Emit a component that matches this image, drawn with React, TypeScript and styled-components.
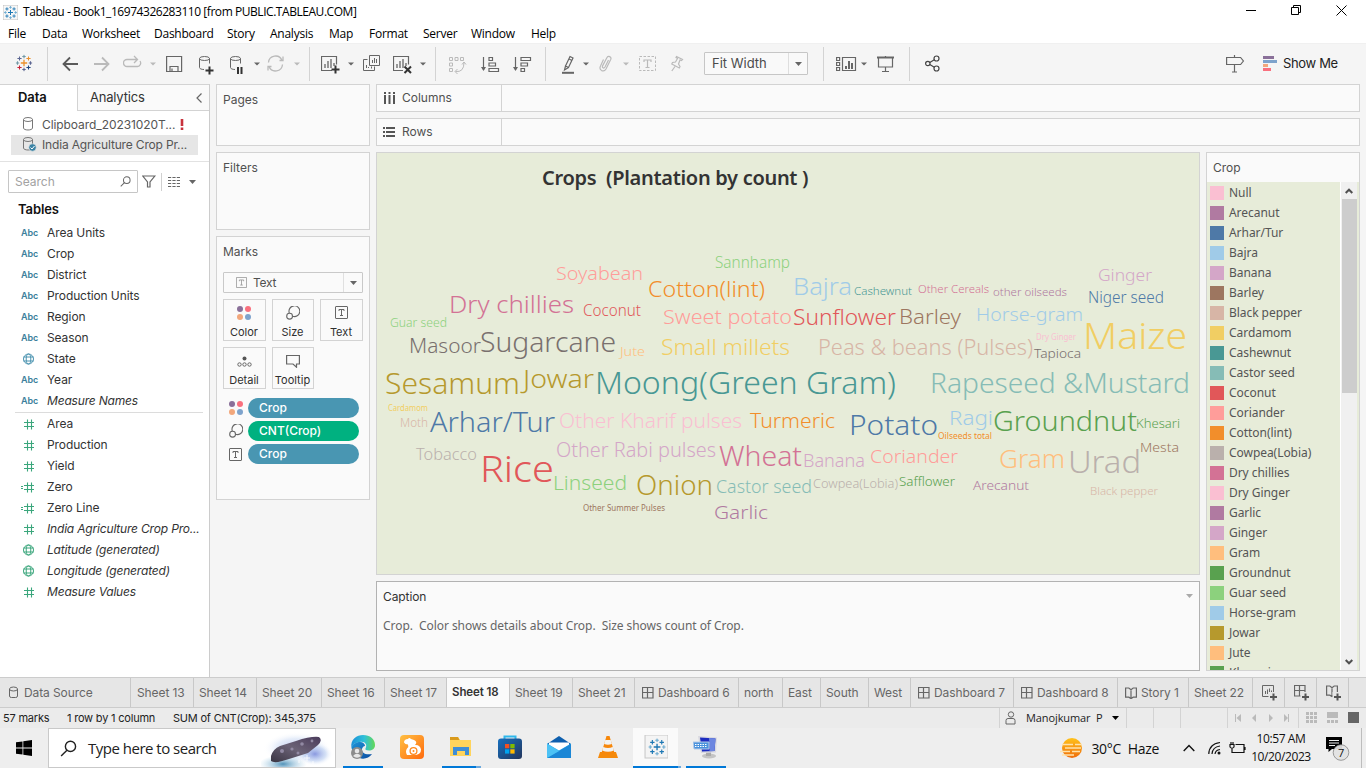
import React from "react";
import styled, { createGlobalStyle } from "styled-components";

const Global = createGlobalStyle`
  html, body { margin: 0; padding: 0; }
  body { width: 1366px; height: 768px; overflow: hidden; background: #f5f5f5; }
  *, *::before, *::after { box-sizing: border-box; }
  svg { display: block; flex: none; }
`;

const UI = `"Inter", "Liberation Sans", sans-serif`;
const SYS = `"Open Sans", "Noto Sans", sans-serif`;
const LINE = "#d3d3d3";

const Window = styled.div`
  width: 1366px;
  height: 768px;
  display: flex;
  flex-direction: column;
  background: #f5f5f5;
  font-family: ${UI};
  font-size: 12px;
  color: #333;
  white-space: pre;
`;

/* ---------- title and menu ---------- */
const TitleBar = styled.header`
  height: 24px;
  flex: none;
  display: flex;
  align-items: center;
  background: #fff;
  padding-left: 3px;
  font: 12px/24px ${SYS};
  color: #000;
`;
const TitleText = styled.span`
  margin-left: 5px;
  letter-spacing: -0.45px;
  flex: 1;
`;
const WindowButtons = styled.div`
  display: flex;
  align-items: center;
  gap: 35px;
  padding: 0 19px 4px 0;
`;
const MenuBar = styled.nav`
  height: 19px;
  flex: none;
  display: flex;
  padding-left: 8px;
  background: #fff;
  font: 12px/20px ${SYS};
  color: #000;
`;
const MenuItem = styled.span<{ $w: number }>`
  width: ${(p) => p.$w}px;
  letter-spacing: -0.25px;
`;

/* ---------- toolbar ---------- */
const Toolbar = styled.div`
  height: 41px;
  flex: none;
  display: flex;
  align-items: center;
  border-top: 1px solid #f0f0f0;
  background: #f5f5f5;
  padding-bottom: 2px;
`;
const Slot = styled.div<{ $w: number }>`
  width: ${(p) => p.$w}px;
  height: 24px;
  flex: none;
  overflow: hidden;
`;
const Sep = styled.div<{ $after: number }>`
  width: 1px;
  height: 34px;
  flex: none;
  margin-top: 2px;
  margin-right: ${(p) => p.$after}px;
  background: ${LINE};
`;
const FitSelect = styled.div`
  width: 104px;
  height: 23px;
  flex: none;
  margin-right: 15px;
  margin-top: 1px;
  display: flex;
  border: 1px solid #c6c6c6;
  border-radius: 1px;
  background: #f9f9f9;
  font-size: 13px;
  line-height: 21px;
  color: #4b4b4b;
  padding-left: 7px;
`;
const FitArrow = styled.span`
  margin-left: auto;
  width: 19px;
  border-left: 1px solid #dedede;
  display: grid;
  place-items: center;
`;
const ShowMe = styled.div`
  display: flex;
  align-items: center;
  gap: 6px;
  font-size: 13px;
  letter-spacing: -0.35px;
  color: #222;
`;

/* ---------- body ---------- */
const Main = styled.div`
  height: 593px;
  flex: none;
  display: flex;
`;
const DataPane = styled.aside`
  width: 210px;
  flex: none;
  background: #fff;
  border-right: 1px solid #ccc;
  border-top: 1px solid ${LINE};
  display: flex;
  flex-direction: column;
`;
const PaneTabs = styled.div`
  height: 26px;
  display: flex;
  font-size: 13px;
  line-height: 25px;
`;
const DataTab = styled.div`
  width: 77px;
  padding-left: 18px;
  font-weight: 600;
  font-size: 13px;
  color: #111;
  letter-spacing: -0.1px;
`;
const AnalyticsTab = styled.div`
  flex: 1;
  display: flex;
  justify-content: space-between;
  align-items: center;
  border-left: 1px solid ${LINE};
  border-bottom: 1px solid ${LINE};
  background: #fafafa;
  padding: 0 7px 0 12px;
  letter-spacing: -0.2px;
`;
const Sources = styled.div`
  padding: 4px 11px 6px;
  height: 51px;
  border-bottom: 1px solid #e2e2e2;
`;
const Source = styled.div<{ $on?: boolean }>`
  height: 20px;
  display: flex;
  align-items: center;
  padding: 0 0 2px 11px;
  gap: 4px;
  color: #555;
  letter-spacing: ${(p) => (p.$on ? -0.16 : -0.08)}px;
  background: ${(p) => (p.$on ? "#e6e6e6" : "transparent")};
`;
const Bang = styled.span`
  width: 4px;
  height: 11px;
  margin-left: 1px;
  display: flex;
`;
const SearchRow = styled.div`
  display: flex;
  align-items: center;
  padding: 8px 0 0 8px;
  height: 31px;
  flex: none;
`;
const SearchBox = styled.div`
  width: 130px;
  height: 23px;
  display: flex;
  align-items: center;
  justify-content: space-between;
  border: 1px solid #c6c6c6;
  border-radius: 1px;
  padding: 0 6px;
  color: #a2a2a2;
  margin-right: 4px;
`;
const TablesTitle = styled.div`
  height: 29px;
  line-height: 33px;
  padding-left: 18px;
  font-weight: 600;
  font-size: 13px;
  letter-spacing: -0.1px;
  color: #111;
`;
const Field = styled.div<{ $italic?: boolean }>`
  height: 21px;
  display: flex;
  align-items: center;
  color: #333;
  letter-spacing: ${(p) => (p.$italic ? -0.18 : -0.1)}px;
  font-style: ${(p) => (p.$italic ? "italic" : "normal")};
`;
const FieldIcon = styled.span`
  width: 47px;
  padding: 1px 0 0 21px;
  color: #3d7f9c;
  font: 600 9px/20px ${UI};
  letter-spacing: -0.1px;
`;
const FieldRule = styled.div`
  margin: 1px 6px 0 15px;
  height: 1px;
  flex: none;
  background: #dcdcdc;
`;

const Cards = styled.div`
  width: 154px;
  margin: 0 6px;
  flex: none;
  display: flex;
  flex-direction: column;
  gap: 6px;
`;
const Card = styled.section<{ $h: number }>`
  height: ${(p) => p.$h}px;
  flex: none;
  border: 1px solid ${LINE};
  background: #fafafa;
  padding: 0 6px;
  color: #505050;
`;
const CardTitle = styled.div`
  height: 30px;
  line-height: 29px;
`;
const MarkSelect = styled.div`
  height: 21px;
  width: 140px;
  margin-top: 5px;
  display: flex;
  align-items: center;
  border: 1px solid #c9c9c9;
  border-radius: 1px;
  padding-left: 12px;
  gap: 6px;
  letter-spacing: -0.3px;
`;
const MarkArrow = styled.span`
  margin-left: auto;
  width: 19px;
  height: 19px;
  border-left: 1px solid #e0e0e0;
  display: grid;
  place-items: center;
`;
const MarkGrid = styled.div`
  display: grid;
  grid-template-columns: 43px 42px 43px;
  gap: 6px;
  margin-top: 6px;
  color: #2f2f2f;
`;
const MarkButton = styled.div`
  height: 42px;
  border: 1px solid ${LINE};
  display: flex;
  flex-direction: column;
  align-items: center;
  justify-content: space-between;
  padding: 6px 1px 1px 0;
  font-size: 11px;
  line-height: 14px;
`;
const Pills = styled.div`
  padding: 9px 4px 0 6px;
  display: flex;
  flex-direction: column;
  gap: 3px;
`;
const PillRow = styled.div`
  display: flex;
  align-items: center;
  gap: 5px;
`;
const Pill = styled.div<{ $c: string }>`
  width: 111px;
  height: 20px;
  border-radius: 10px;
  padding-left: 11px;
  line-height: 20px;
  color: #fff;
  font-weight: 500;
  background: ${(p) => p.$c};
`;

const Workspace = styled.div`
  width: 984px;
  flex: none;
  display: flex;
  flex-direction: column;
  gap: 6px;
`;
const Shelf = styled.div`
  height: 28px;
  flex: none;
  display: flex;
  border: 1px solid ${LINE};
  background: #fafafa;
`;
const ShelfName = styled.div`
  width: 125px;
  display: flex;
  align-items: center;
  gap: 6px;
  padding: 0 0 1px 6px;
  border-right: 1px solid ${LINE};
  color: #505050;
`;
const Lower = styled.div`
  display: flex;
  gap: 6px;
`;
const ViewColumn = styled.div`
  width: 824px;
  display: flex;
  flex-direction: column;
  gap: 6px;
`;
const View = styled.section`
  height: 423px;
  border: 1px solid ${LINE};
  background: #e7ecd9;
`;
const ViewTitle = styled.h1`
  margin: 0;
  height: 47px;
  padding-left: 165px;
  font: 600 20px/50px "Noto Sans", sans-serif;
  letter-spacing: -0.3px;
  color: #333;
`;
const Caption = styled.section`
  height: 90px;
  border: 1px solid #b2b2b2;
  background: #fafafa;
  padding: 0 6px;
`;
const CaptionHead = styled.div`
  height: 28px;
  display: flex;
  align-items: center;
  justify-content: space-between;
  color: #333;
  letter-spacing: -0.1px;
`;
const CaptionText = styled.p`
  margin: 7px 0 0;
  font: 12px/17px "Noto Sans", sans-serif;
  letter-spacing: -0.06px;
  color: #666;
`;
const Legend = styled.section`
  width: 154px;
  height: 519px;
  border: 1px solid ${LINE};
  background: #fafafa;
`;
const LegendHead = styled.div`
  height: 29px;
  padding-left: 6px;
  line-height: 30px;
  color: #505050;
`;
const LegendBody = styled.div`
  height: 488px;
  display: flex;
  overflow: hidden;
  background: #e7ecd9;
`;
const LegendList = styled.div`
  width: 133px;
  height: 488px;
  padding-top: 1px;
  overflow: hidden;
`;
const LegendItem = styled.div`
  height: 20px;
  display: flex;
  align-items: center;
  padding-left: 3px;
  gap: 5px;
  font: 12px/20px "Noto Sans", sans-serif;
  letter-spacing: -0.05px;
  color: #555;
`;
const Swatch = styled.span<{ $c: string }>`
  width: 14px;
  height: 14px;
  background: ${(p) => p.$c};
`;
const Scroll = styled.div`
  width: 17px;
  border-left: 1px solid #fff;
  background: #f0f0f0;
  display: flex;
  flex-direction: column;
  align-items: center;
  margin-right: 2px;
`;
const ScrollEnd = styled.div`
  height: 17px;
  display: grid;
  place-items: center;
`;
const Thumb = styled.div`
  width: 15px;
  height: 194px;
  margin-bottom: auto;
  background: #cdcdcd;
`;

/* ---------- sheet tabs and status ---------- */
const SheetTabs = styled.div`
  height: 31px;
  flex: none;
  display: flex;
  border-top: 1px solid #ccc;
  border-bottom: 1px solid #ccc;
  background: #e6e6e6;
`;
const SheetTab = styled.div<{ $w: number; $on?: boolean; $pad?: number }>`
  width: ${(p) => p.$w}px;
  flex: none;
  display: flex;
  align-items: center;
  gap: 4px;
  padding-left: ${(p) => p.$pad ?? 6}px;
  padding-bottom: ${(p) => (p.$on ? 2 : 0)}px;
  border-right: 1px solid #c8c8c8;
  background: ${(p) => (p.$on ? "#fafafa" : "transparent")};
  color: ${(p) => (p.$on ? "#333" : "#666")};
  font-weight: ${(p) => (p.$on ? 600 : 400)};
  letter-spacing: ${(p) => (p.$on ? -0.1 : -0.1)}px;
  font-size: ${(p) => (p.$on ? 11.5 : 12)}px;
`;
const Status = styled.div`
  height: 20px;
  flex: none;
  display: flex;
  background: #ebebeb;
  font-size: 11px;
  line-height: 20px;
  letter-spacing: -0.2px;
  color: #222;
  padding-left: 3px;
`;
const StatusText = styled.span<{ $w: number }>`
  width: ${(p) => p.$w}px;
`;
const StatusCell = styled.div<{ $w: number }>`
  width: ${(p) => p.$w}px;
  border-left: 1px solid ${LINE};
  display: flex;
  align-items: center;
  padding-left: 5px;
`;
const UserName = styled.span`
  width: 77px;
  margin: 0 9px 0 9px;
  font: 11px/20px ${SYS};
  letter-spacing: -0.1px;
`;

/* ---------- taskbar ---------- */
const Taskbar = styled.footer`
  height: 40px;
  flex: none;
  display: flex;
  align-items: center;
  background: #eeeeee;
  color: #111;
  font-family: ${SYS};
`;
const Start = styled.div`
  width: 48px;
  display: grid;
  place-items: center;
`;
const TaskSearch = styled.div`
  width: 288px;
  height: 40px;
  display: flex;
  align-items: center;
  justify-content: space-between;
  background: #fff;
  border: 1px solid #c9c9c9;
  padding-left: 11px;
  font-size: 15px;
  letter-spacing: -0.5px;
  color: #222;
`;
const TaskPrompt = styled.span`
  flex: 1;
  margin-left: 11px;
`;
const TaskApp = styled.div<{ $w: number; $line?: string; $tile?: boolean }>`
  width: ${(p) => p.$w}px;
  height: 40px;
  flex: none;
  display: grid;
  place-items: center;
  background: ${(p) => (p.$tile ? "#fafafa" : "transparent")};
  border-bottom: 2px solid ${(p) => p.$line ?? "transparent"};
`;
const Gap = styled.div<{ $w: number }>`
  width: ${(p) => p.$w}px;
  flex: none;
`;
const StackEdge = styled.div<{ $w: number }>`
  width: ${(p) => p.$w}px;
  height: 40px;
  flex: none;
  border-bottom: 2px solid #6ca9de;
`;
const Tray = styled.div`
  margin-left: auto;
  display: flex;
  align-items: center;
  font-size: 14px;
  letter-spacing: -0.3px;
`;
const Clock = styled.div`
  width: 70px;
  text-align: center;
  font-size: 12px;
  line-height: 18px;
  letter-spacing: -0.4px;
`;
const TrayEnd = styled.div`
  width: 5px;
  height: 40px;
  border-left: 1px solid #bdbdbd;
`;

/* ---------- icons ---------- */
const Caret = ({ c = "#666" }: { c?: string }) => (
  <svg width="7" height="4" viewBox="0 0 7 4"><path d="M0 0H7L3.5 4Z" fill={c} /></svg>
);
const ToolCaret = ({ c = "#666" }: { c?: string }) => (
  <svg width="6" height="24"><path d="M0 11.5H6L3 14.5Z" fill={c} /></svg>
);

const crosses: [number, number, number, string, string][] = [
  [8.5, 8.5, 3.2, "#eb912c", "#1c77b4"],
  [4, 4, 2.1, "#5c6692", "#1c77b4"],
  [13, 4, 2.1, "#eb912c", "#1c77b4"],
  [4, 13, 2.1, "#c72035", "#1c77b4"],
  [13, 13, 2.1, "#1f447e", "#1c77b4"],
  [8.5, 2, 1.7, "#7199a6", "#6aaad0"],
  [8.5, 15, 1.7, "#5c6692", "#6aaad0"],
  [2, 8.5, 1.7, "#7199a6", "#6aaad0"],
  [15, 8.5, 1.7, "#5c6692", "#6aaad0"],
];
const TableauMark = ({ size, mono }: { size: number; mono?: boolean }) => (
  <svg width={size} height={size} viewBox="0 0 17 17">
    {crosses.map(([x, y, r, c, m], i) => (
      <path key={i} d={`M${x - r} ${y}h${2 * r}M${x} ${y - r}v${2 * r}`} stroke={mono ? m : c} strokeWidth={i === 0 ? 1.3 : 1.1} />
    ))}
  </svg>
);
const Bars = ({ y = 0 }) => (
  <path d={`M4 ${y + 9}v4M7 ${y + 6}v7M10 ${y + 4}v9M13 ${y + 8}v3`} stroke="#666" strokeWidth="1.3" />
);
const Db = () => (
  <g fill="none" stroke="#666">
    <ellipse cx="5.5" cy="7.5" rx="5" ry="2" />
    <path d="M.5 7.5v9c0 1.2 2 2 4.5 2M10.5 7.5v5" />
  </g>
);
const SourceIcon = ({ check }: { check?: boolean }) => (
  <svg width="16" height="16" viewBox="0 0 16 16" fill="none" stroke="#777">
    <ellipse cx="6" cy="3.5" rx="4.5" ry="2" />
    <path d="M1.500 3.500V12c0 1.200 2 2 4.500 2s4.500-.8 4.500-2V3.500" />
    {check && (<><circle cx="10.500" cy="11.500" r="3.700" fill="#3a83a5" stroke="#e6e6e6" strokeWidth=".6" /><path d="M8.500 11.500l1.500 1.500 2.500-3" stroke="#fff" /></>)}
  </svg>
);
const TextBox = () => (
  <svg width="13" height="13" viewBox="0 0 13 13" fill="none" stroke="#666">
    <rect x=".5" y=".5" width="12" height="12" rx=".5" />
    <path d="M4 5V3.500H9V5M6.500 3.500v6M5 9.500h3" />
  </svg>
);
const ColorDots = () => (
  <svg width="14" height="14">
    <circle cx="3" cy="3" r="3" fill="#8a7099" /><circle cx="11" cy="3" r="3" fill="#f9707e" />
    <circle cx="3" cy="11" r="3" fill="#f2a77c" /><circle cx="11" cy="11" r="3" fill="#7ea3cc" />
  </svg>
);
const SizeIcon = () => (
  <svg width="14" height="14" fill="none" stroke="#666" strokeWidth="1.100">
    <path d="M3.300 7A5.400 5.400 0 1 1 6.600 10.300" /><circle cx="3.600" cy="10.200" r="2.900" />
  </svg>
);
const Magnifier = ({ s = 12, c = "#666", w = 1.1 }: { s?: number; c?: string; w?: number }) => (
  <svg width={s} height={s} viewBox="0 0 12 12" fill="none" stroke={c} strokeWidth={w}>
    <circle cx="7.400" cy="4.500" r="3.600" /><path d="M4.900 7.200L.8 11.300" />
  </svg>
);
const Plus = () => (
  <>
    <rect x="6.500" y="7" width="9" height="9" fill="#e6e6e6" stroke="none" />
    <path d="M11.500 8.500v7M8 12h7" stroke="#555" strokeWidth="2" />
  </>
);
const Grid4 = ({ plus }: { plus?: boolean }) => (
  <svg width={plus ? 16 : 12} height={plus ? 16 : 12} fill="none" stroke="#666">
    <path d="M.5 .5h10.500v10.500H.5zM.5 5.500h10.500M5.500 .5v10.500" strokeWidth="1.200" />
    {plus && <Plus />}
  </svg>
);
const Book = ({ plus }: { plus?: boolean }) => (
  <svg width={plus ? 16 : 12} height={plus ? 16 : 12} fill="none" stroke="#666" strokeWidth="1.200">
    <path d="M.6 1h3.200l2.200 1.700L8.200 1h3.200v9.200H8.200L6 11.600 3.800 10.200H.6zM6 2.700v8.500" />
    {plus && <Plus />}
  </svg>
);
const Hash = ({ eq }: { eq?: boolean }) => (
  <svg width="15" height="12" viewBox="1 0 15 12" stroke="#3ba67c" fill="none">
    <path d="M4 4.500h10M4 8.500h10M7.500 1.500v10M11.500 1.500v10" strokeWidth="1.100" />
    {eq && <path d="M0 5.500h3M0 7.500h3" />}
  </svg>
);
const Globe = ({ c }: { c: string }) => (
  <svg width="15" height="12" viewBox="1 0 15 12" stroke={c} fill="none">
    <circle cx="8.500" cy="6" r="5" /><ellipse cx="8.500" cy="6" rx="2.300" ry="5" />
    <path d="M3.500 4h10M3.500 8h10" />
  </svg>
);
const Person = () => (
  <svg width="12" height="14" fill="none" stroke="#666"><circle cx="6" cy="3.500" r="2.700" /><path d="M1 13v-3.500q0-2 2-2h5q2 0 2 2V13z" /></svg>
);

/* ---------- data ---------- */
const menus: [string, number][] = [["File", 34], ["Data", 40], ["Worksheet", 72], ["Dashboard", 73], ["Story", 43], ["Analysis", 59], ["Map", 40], ["Format", 54], ["Server", 48], ["Window", 60], ["Help", 40]];

const P = {
  blue: "#4e79a7", sky: "#a0cbe8", orange: "#f28e2b", peach: "#ffbe7d", green: "#59a14f", lime: "#8cd17d",
  olive: "#b6992d", yellow: "#f1ce63", teal: "#499894", aqua: "#86bcb6", red: "#e15759", salmon: "#ff9d9a",
  grey: "#79706e", silver: "#bab0ac", rose: "#d37295", pink: "#fabfd2", plum: "#b07aa1", lilac: "#d4a6c8",
  brown: "#9d7660", sand: "#d7b5a6",
};

// word, left, right, baseline, size, colour
const words: [string, number, number, number, number, string][] = [
  ["Sannhamp", 715, 790, 268, 15.5, P.lime],
  ["Soyabean", 556, 643, 279.5, 18.500, P.salmon],
  ["Cotton(lint)", 648, 765, 296.5, 21.500, P.orange],
  ["Bajra", 793, 852, 294.5, 23, P.sky],
  ["Cashewnut", 854, 912, 295, 11.500, P.teal],
  ["Other Cereals", 918, 989, 293, 11.500, P.rose],
  ["other oilseeds", 993, 1067, 296, 11.500, P.plum],
  ["Ginger", 1098, 1152, 281, 17, P.lilac],
  ["Niger seed", 1088, 1164, 303, 15.500, P.blue],
  ["Dry chillies", 449, 574, 313, 24.500, P.rose],
  ["Coconut", 583, 641, 316, 15.500, P.red],
  ["Guar seed", 390, 447, 327, 12, P.lime],
  ["Sweet potato", 663, 792, 324, 20, P.salmon],
  ["Sunflower", 793, 896, 325, 21, P.red],
  ["Barley", 899, 961, 324, 20.500, P.brown],
  ["Horse-gram", 976, 1083, 321, 18.500, P.sky],
  ["Masoor", 409, 481, 352.5, 20.500, P.grey],
  ["Sugarcane", 480, 616, 351.5, 27, P.grey],
  ["Jute", 620, 645, 356, 12.500, P.peach],
  ["Small millets", 661, 790, 354.5, 21, P.yellow],
  ["Peas & beans (Pulses)", 818, 1033, 354.5, 21.500, P.sand],
  ["Dry Ginger", 1036, 1076, 340, 8, P.pink],
  ["Tapioca", 1034, 1081, 358, 13, P.grey],
  ["Maize", 1083, 1187, 348.500, 37, P.yellow],
  ["Sesamum", 385, 520, 394, 29.500, P.olive],
  ["Jowar", 523, 594, 387.5, 25.500, P.olive],
  ["Moong(Green Gram)", 595, 896, 394, 31, P.teal],
  ["Rapeseed &Mustard", 930, 1190, 393, 27.500, P.aqua],
  ["Cardamom", 388, 428, 411, 8, P.yellow],
  ["Moth", 400, 428, 427, 12, P.sand],
  ["Arhar/Tur", 430, 555, 432, 27.500, P.blue],
  ["Other Kharif pulses", 559, 742, 427.5, 20.500, P.pink],
  ["Turmeric", 750, 835, 427.5, 19.500, P.orange],
  ["Potato", 849, 938, 434.5, 27.500, P.blue],
  ["Ragi", 949, 993, 424.5, 20, P.sky],
  ["Groundnut", 993, 1137, 431, 27.500, P.green],
  ["Khesari", 1136, 1180, 428, 12, P.green],
  ["Oilseeds total", 938, 992, 439, 8, P.orange],
  ["Tobacco", 416, 477, 460, 16, P.silver],
  ["Rice", 480, 554, 481.5, 36, P.red],
  ["Other Rabi pulses", 556, 716, 456.5, 19.500, P.lilac],
  ["Wheat", 719, 802, 465.5, 27.500, P.rose],
  ["Banana", 803, 865, 467, 17.500, P.lilac],
  ["Coriander", 870, 958, 463, 19, P.salmon],
  ["Gram", 999, 1065, 468, 25, P.peach],
  ["Urad", 1068, 1141, 473, 31, P.silver],
  ["Mesta", 1140, 1179, 452, 13, P.brown],
  ["Linseed", 553, 627, 489.5, 20, P.lime],
  ["Onion", 636, 713, 494.5, 27, P.olive],
  ["Castor seed", 716, 812, 492.5, 17.500, P.aqua],
  ["Cowpea(Lobia)", 813, 898, 488, 12.500, P.silver],
  ["Safflower", 899, 955, 486, 12.500, P.green],
  ["Arecanut", 973, 1029, 490, 13, P.plum],
  ["Black pepper", 1090, 1158, 495, 11.500, P.sand],
  ["Other Summer Pulses", 583, 665, 511, 8.500, P.brown],
  ["Garlic", 714, 768, 518.5, 19, P.plum],
];

const legend: [string, string][] = [
  ["Null", P.pink], ["Arecanut", P.plum], ["Arhar/Tur", P.blue], ["Bajra", P.sky], ["Banana", P.lilac],
  ["Barley", P.brown], ["Black pepper", P.sand], ["Cardamom", P.yellow], ["Cashewnut", P.teal],
  ["Castor seed", P.aqua], ["Coconut", P.red], ["Coriander", P.salmon], ["Cotton(lint)", P.orange],
  ["Cowpea(Lobia)", P.silver], ["Dry chillies", P.rose], ["Dry Ginger", P.pink], ["Garlic", P.plum],
  ["Ginger", P.lilac], ["Gram", P.peach], ["Groundnut", P.green], ["Guar seed", P.lime],
  ["Horse-gram", P.sky], ["Jowar", P.olive], ["Jute", P.peach], ["Khesari", P.green],
];

const dimensions = ["Area Units", "Crop", "District", "Production Units", "Region", "Season", "State", "Year"];
const measures: [string, "hash" | "calc" | "globe", boolean][] = [
  ["Area", "hash", false], ["Production", "hash", false], ["Yield", "hash", false], ["Zero", "calc", false],
  ["Zero Line", "calc", false], ["India Agriculture Crop Pro...", "hash", true], ["Latitude (generated)", "globe", true],
  ["Longitude (generated)", "globe", true], ["Measure Values", "hash", true],
];

type TabDef = { label: string; w: number; icon?: React.ReactNode; on?: boolean; pad?: number };
const tabs: TabDef[] = [
  { label: "Data Source", w: 131, pad: 9, icon: <svg width="11" height="14" fill="none" stroke="#666"><ellipse cx="4.500" cy="3" rx="4" ry="2" /><path d="M.5 3v7q0 1.500 2 1.500h4q2 0 2-1.500V3" /></svg> },
  { label: "Sheet 13", w: 63 }, { label: "Sheet 14", w: 63, pad: 5 }, { label: "Sheet 20", w: 65, pad: 5 },
  { label: "Sheet 16", w: 63, pad: 5 }, { label: "Sheet 17", w: 62, pad: 5 }, { label: "Sheet 18", w: 63, on: true, pad: 5 },
  { label: "Sheet 19", w: 63, pad: 5 }, { label: "Sheet 21", w: 62, pad: 5 },
  { label: "Dashboard 6", w: 104, pad: 7, icon: <Grid4 /> },
  { label: "north", w: 44, pad: 5 }, { label: "East", w: 38, pad: 5 }, { label: "South", w: 48, pad: 5 }, { label: "West", w: 42, pad: 5 },
  { label: "Dashboard 7", w: 103, pad: 7, icon: <Grid4 /> }, { label: "Dashboard 8", w: 104, pad: 7, icon: <Grid4 /> },
  { label: "Story 1", w: 71, pad: 7, icon: <Book /> }, { label: "Sheet 22", w: 64, pad: 5 },
];

const D = "#666";
const L = "#bababa";

const ToolbarRow = () => (
  <Toolbar>
    <Gap $w={15} />
    <Slot $w={32}><svg width="18" height="24" viewBox="0 -3.500 17 24"><TableauMark size={17} /></svg></Slot>
    <Sep $after={14} />
    <Slot $w={32}><svg width="17" height="24" fill="none" stroke="#5a5a5a" strokeWidth="1.800"><path d="M1 13H16M8 6.500L1.500 13L8 19.500" /></svg></Slot>
    <Slot $w={29}><svg width="17" height="24" fill="none" stroke={L} strokeWidth="1.800"><path d="M0 13H15M8 6.500L14.500 13L8 19.500" /></svg></Slot>
    <Slot $w={27}><svg width="19" height="24" fill="none" stroke={L} strokeWidth="1.300"><path d="M14 8.500H4a3.500 3.500 0 0 0 0 7h10.500a3.500 3.500 0 0 0 2.500-5.500M11 5l3.500 3.500L11 12" /></svg></Slot>
    <Slot $w={16}><ToolCaret c={L} /></Slot>
    <Slot $w={33}><svg width="17" height="24" fill="none" stroke={D} strokeWidth="1.200"><path d="M.6 5.500h15v15h-15zM4 20v-4.500h8V20M6 20v-2.500" /></svg></Slot>
    <Slot $w={31}><svg width="16" height="24"><Db /><path d="M10.500 15.500v8M6.500 19.500h8" stroke="#333" strokeWidth="2" /></svg></Slot>
    <Slot $w={24}><svg width="14" height="24"><Db /><path d="M8 16v7M11.500 16v7" stroke="#333" strokeWidth="2" /></svg></Slot>
    <Slot $w={13}><ToolCaret /></Slot>
    <Slot $w={27}><svg width="18" height="24" fill="none" stroke={L} strokeWidth="1.300"><path d="M1.500 11.500A7 7 0 0 1 15 9.500M15.500 13.500A7 7 0 0 1 2 15.500M12.500 9.500h3.500v-4M4.500 15.500H1v4" /></svg></Slot>
    <Slot $w={15}><ToolCaret c={L} /></Slot>
    <Sep $after={11} />
    <Slot $w={27}><svg width="20" height="24" fill="none" stroke={D}><path d="M11 19.500H.5V5.500h15v8" strokeWidth="1.200" /><Bars y={4} /><path d="M14.500 14.500v8M10.500 18.500h8" stroke="#333" strokeWidth="2" /></svg></Slot>
    <Slot $w={15}><ToolCaret /></Slot>
    <Slot $w={30}><svg width="18" height="24" fill="none" stroke={D}><path d="M4.500 8.500H.5v11h11v-4M6.500 4.500h10v10h-10zM9.500 12v-3M11.500 12V7M13.500 12V8M3.500 17v-3M5.500 17v-1M8.500 17.500v-2" /></svg></Slot>
    <Slot $w={27}><svg width="20" height="24" fill="none" stroke={D}><path d="M10 19.500H.5V5.500h15v8" strokeWidth="1.200" /><Bars y={4} /><path d="M11.500 15.500l6.500 6.500M18 15.500L11.500 22" stroke="#333" strokeWidth="2" /></svg></Slot>
    <Slot $w={15}><ToolCaret /></Slot>
    <Sep $after={13} />
    <Slot $w={32}><svg width="18" height="24" fill="none" stroke={L}><path d="M.5 6.500h3v3h-3zM6 6.500h3v3H6zM11.500 6.500h3v3h-3zM.5 12h3v3h-3zM.5 17.500h3v3h-3zM6.500 20.500q8.500 1 8.500-9M13 13.500l2-2.500 2 2.500M8.500 18l-2.500 2.500L8.500 23" /></svg></Slot>
    <Slot $w={32}><svg width="19" height="24" fill="none" stroke={D} strokeWidth="1.200"><path d="M2.500 6v13M8 6.500h3.500v3H8zM8 12h6.500v3H8zM8 17.500h9.500v3H8z" /><path d="M0 16h5l-2.500 4z" fill={D} stroke="none" /></svg></Slot>
    <Slot $w={32}><svg width="19" height="24" fill="none" stroke={D} strokeWidth="1.200"><path d="M2.500 6v13M8 6.500h9.500v3H8zM8 12h6.500v3H8zM8 17.500h3.500v3H8z" /><path d="M0 16h5l-2.500 4z" fill={D} stroke="none" /></svg></Slot>
    <Sep $after={16} />
    <Slot $w={21}><svg width="13" height="24" fill="none" stroke={D} strokeWidth="1.200"><path d="M8 5.500l3 1.500-4.500 9.500-3-1.500zM3.500 15l-1 4 4-2.500M7 8l3 1.500" /><path d="M0 21.800h12" strokeWidth="2" /></svg></Slot>
    <Slot $w={16}><ToolCaret /></Slot>
    <Slot $w={24}><svg width="14" height="24" fill="none" stroke={L} strokeWidth="1.200"><path d="M9.500 9l-3.500 7q-1 1.500-2 .8-1-.6-.3-2.200L8 6.500q1-1.700 2.700-.9 1.900 1 1 3L7 18q-1.600 2.700-4.300 1.600Q0 18 1.500 15l3-6.500" /></svg></Slot>
    <Slot $w={16}><ToolCaret c={L} /></Slot>
    <Slot $w={32}><svg width="18" height="24" fill="none" stroke={L}><rect x=".5" y="5.500" width="16" height="14" strokeDasharray="2.500 1.500" /><path d="M5 11V9h7v2M8.500 9v8M6.500 16.500h4" strokeWidth="1.200" /></svg></Slot>
    <Slot $w={33}><svg width="14" height="24" fill="none" stroke={L} strokeWidth="1.200"><path d="M5.500 5.500l6 3-1 1-1.500-.5-1.500 4 1.500 2.500-.7 1.500L.8 13l.7-1.500 3-.5L6.500 7.500 5 6.500zM4 15.500L.8 20" /></svg></Slot>
    <FitSelect>Fit Width<FitArrow><Caret /></FitArrow></FitSelect>
    <Sep $after={12} />
    <Slot $w={25}><svg width="21" height="24" fill="none" stroke={D} strokeWidth="1.200"><path d="M.6 6.500h3v3h-3zM.6 11.500h3v3h-3zM.6 16.500h3v3h-3zM6.500 6.500h13v13h-13z" /><path d="M10 18v-3M13 18v-8M16 18v-6" strokeWidth="2" /></svg></Slot>
    <Slot $w={16}><ToolCaret /></Slot>
    <Slot $w={32}><svg width="18" height="24" fill="none" stroke={D} strokeWidth="1.200"><path d="M0 6.500h17" strokeWidth="2" /><path d="M1.500 6.500v9.500h14V6.500M8.500 5v1M8.500 16v4M5 20.500h7" /></svg></Slot>
    <Sep $after={15} />
    <Slot $w={301}><svg width="16" height="24" fill="none" stroke="#444" strokeWidth="1.200"><circle cx="2.800" cy="12.500" r="2.200" /><circle cx="11.500" cy="7.500" r="2.500" /><circle cx="11.500" cy="17.500" r="2.500" /><path d="M4.800 11.400l4.500-2.600M4.800 13.600l4.500 2.600" /></svg></Slot>
    <Slot $w={37}><svg width="19" height="24" fill="none" stroke={D} strokeWidth="1.200"><path d="M.6 6.500h14l2.800 3.500-2.800 3.500H.6zM8.500 4v2M8.500 13.500v7M6 21h5" /></svg></Slot>
    <ShowMe>
      <svg width="14" height="15"><path d="M0 0h11v3H0z" fill="#8a7099" /><path d="M0 4h14v3H0z" fill="#7ea3cc" /><path d="M0 8h5v3H0z" fill="#f2a77c" /><path d="M0 12h8v3H0z" fill="#f9707e" /></svg>
      Show Me
    </ShowMe>
  </Toolbar>
);

const DataPanel = () => (
  <DataPane>
    <PaneTabs>
      <DataTab>Data</DataTab>
      <AnalyticsTab>Analytics<svg width="6" height="10" fill="none" stroke="#666" strokeWidth="1.200"><path d="M5.500 .5L1 5l4.500 4.500" /></svg></AnalyticsTab>
    </PaneTabs>
    <Sources>
      <Source><SourceIcon />Clipboard_20231020T...<Bang><svg width="4" height="11" fill="#c8323c"><path d="M.7 0h2.600v7H.7zM.7 8.500h2.600V11H.7z" /></svg></Bang></Source>
      <Source $on><SourceIcon check />India Agriculture Crop Pr...</Source>
    </Sources>
    <SearchRow>
      <SearchBox>Search<Magnifier s={11} /></SearchBox>
      <svg width="26" height="18" fill="none" stroke="#666" strokeWidth="1.200"><path d="M.8 3h12L8 9v5H5.500V9z" /><path d="M19.500 0v18" stroke="#d0d0d0" strokeWidth="1" /></svg>
      <svg width="21" height="12" stroke="#666" fill="none"><path d="M0 1.500h12M0 4.500h12M0 7.500h12M0 10.500h12" strokeDasharray="3.200 1.200" /></svg>
      <Caret />
    </SearchRow>
    <TablesTitle>Tables</TablesTitle>
    {dimensions.map((d) => (
      <Field key={d}><FieldIcon>{d === "State" ? <Globe c="#4a93b0" /> : "Abc"}</FieldIcon>{d}</Field>
    ))}
    <Field $italic><FieldIcon>Abc</FieldIcon>Measure Names</Field>
    <FieldRule />
    {measures.map(([n, k, it]) => (
      <Field key={n} $italic={it}><FieldIcon>{k === "globe" ? <Globe c="#3ba67c" /> : <Hash eq={k === "calc"} />}</FieldIcon>{n}</Field>
    ))}
  </DataPane>
);

const MarksCard = () => (
  <Card $h={264}>
    <CardTitle>Marks</CardTitle>
    <MarkSelect><svg width="11" height="11" viewBox="0 0 13 13" fill="none" stroke="#999"><path d="M.5 .5h12v12H.5zM4 5V3.500H9V5M6.500 3.500v6M5 9.500h3" /></svg>Text<MarkArrow><Caret /></MarkArrow></MarkSelect>
    <MarkGrid>
      <MarkButton><ColorDots />Color</MarkButton>
      <MarkButton><SizeIcon />Size</MarkButton>
      <MarkButton><TextBox />Text</MarkButton>
      <MarkButton><svg width="15" height="14" fill="none" stroke="#666"><circle cx="7.500" cy="4.500" r="2" fill="#555" stroke="none" /><circle cx="2.500" cy="10.500" r="1.700" /><circle cx="7.500" cy="10.500" r="1.700" /><circle cx="12.500" cy="10.500" r="1.700" /></svg>Detail</MarkButton>
      <MarkButton><svg width="14" height="14" fill="none" stroke="#666" strokeWidth="1.200"><path d="M.6 1.500h12.800v8.500h-2.900v3.200L7 10H.6z" /></svg>Tooltip</MarkButton>
    </MarkGrid>
    <Pills>
      <PillRow><ColorDots /><Pill $c="#4996b2">Crop</Pill></PillRow>
      <PillRow><SizeIcon /><Pill $c="#00b180">CNT(Crop)</Pill></PillRow>
      <PillRow><svg width="14" height="13"><TextBox /></svg><Pill $c="#4996b2">Crop</Pill></PillRow>
    </Pills>
  </Card>
);

const WordCloud = () => (
  <svg width="822" height="374" viewBox="377 200 822 374" fontFamily="Noto Sans, sans-serif">
    {words.map(([w, x1, x2, y, s, c]) => (
      <text key={w} x={x1} y={y} fontSize={s} fill={c} fontWeight={s < 9 ? 400 : 300} textLength={x2 - x1} lengthAdjust="spacingAndGlyphs">{w}</text>
    ))}
  </svg>
);

const TaskbarRow = () => (
  <Taskbar>
    <Start><svg width="16" height="16" fill="#000"><path d="M0 2.300L6.500 1.400V7.600H0zM7.300 1.300L16 0v7.600H7.300zM0 8.400h6.500v6.200L0 13.700zM7.300 8.400H16V16l-8.700-1.200z" /></svg></Start>
    <TaskSearch>
      <Magnifier s={17} c="#222" w={1} />
      <TaskPrompt>Type here to search</TaskPrompt>
      <svg width="74" height="38" viewBox="0 0 74 38">
        <defs>
          <radialGradient id="glow"><stop offset="0" stopColor="#7f8fdc" stopOpacity=".9" /><stop offset=".6" stopColor="#b9cdf0" stopOpacity=".6" /><stop offset="1" stopColor="#fff" stopOpacity="0" /></radialGradient>
          <radialGradient id="glow2"><stop offset="0" stopColor="#3f86b0" stopOpacity=".9" /><stop offset="1" stopColor="#9fcbe6" stopOpacity="0" /></radialGradient>
          <linearGradient id="rock" x1="0" x2="1" y1="1" y2="0"><stop offset="0" stopColor="#3a3543" /><stop offset=".5" stopColor="#6b6276" /><stop offset="1" stopColor="#4b3c5c" /></linearGradient>
        </defs>
        <ellipse cx="36" cy="19" rx="34" ry="16" fill="url(#glow)" opacity=".6" />
        <ellipse cx="22" cy="35" rx="24" ry="9" fill="url(#glow2)" />
        <ellipse cx="54" cy="25" rx="18" ry="12" fill="url(#glow)" />
        <path d="M10 27Q12 20 19 17L35 12Q50 7 58 8 62 11 57 16L47 24 28 30Q14 35 10 32Z" fill="url(#rock)" />
        <g fill="#9189a3"><circle cx="21" cy="22" r="2" /><circle cx="31" cy="20" r="1.600" /><circle cx="41" cy="15" r="1.800" /><circle cx="51" cy="12" r="1.400" /><circle cx="37" cy="24" r="1.500" /></g>
        <path d="M46 26v6M43 29h6M38 31v3M52 32v3" stroke="#fff" strokeWidth=".8" />
      </svg>
    </TaskSearch>
    <Gap $w={7} />
    <TaskApp $w={40} $line="#0078d7">
      <svg width="26" height="26" viewBox="0 0 26 26">
        <defs>
          <linearGradient id="e1" x1="0" x2="1"><stop offset="0" stopColor="#1b8fd8" /><stop offset=".55" stopColor="#2fc0d8" /><stop offset="1" stopColor="#63d855" /></linearGradient>
          <linearGradient id="e2" x1="0" x2="1" y2="1"><stop offset="0" stopColor="#1c94d8" /><stop offset="1" stopColor="#0c4ba0" /></linearGradient>
        </defs>
        <path d="M1.500 14C0 5 7 1 13 1c7 0 12 4 12 10 0 4-3 5.500-6 5.500s-4-1-3.500-2C18 10 14 7 10 8c-4 0-7 2-8.500 6z" fill="url(#e1)" />
        <path d="M1.500 14C3 9 7 8 10 8c3 0 5 2 5 4-4 0-6 10 7 8-5 7-17 7-20.500-6z" fill="url(#e2)" />
        <circle cx="7" cy="19" r="6" fill="#8c8c8c" /><circle cx="7" cy="17" r="2.300" fill="#e6e6e6" /><path d="M3 22q4-4.500 8 0-4 3.500-8 0z" fill="#e6e6e6" />
      </svg>
    </TaskApp>
    <Gap $w={9} />
    <TaskApp $w={40}>
      <svg width="24" height="24" viewBox="0 0 24 24">
        <defs><linearGradient id="uc" x1="0" x2="1" y2="1"><stop offset="0" stopColor="#ffc043" /><stop offset="1" stopColor="#ff6a0d" /></linearGradient></defs>
        <rect width="24" height="24" rx="4" fill="url(#uc)" />
        <path d="M11 4Q9 2 8 4 4 4 4 7.500q1 2 4 2 1 2-1 4-2 3 0 6.500h9q5-1 5-5.500-1-5-6-4.500 3-3-1-5-3-1-3-1z" fill="#fff" />
        <circle cx="13.500" cy="16" r="3.400" fill="none" stroke="#ff8a1f" strokeWidth="1.300" /><circle cx="13.500" cy="16" r="1" fill="#ff8a1f" />
      </svg>
    </TaskApp>
    <Gap $w={10} />
    <TaskApp $w={34} $line="#0078d7">
      <svg width="26" height="22" viewBox="0 0 26 22"><path d="M4 1h8l2 3h11v16H4z" fill="#ffd45c" /><path d="M4 1h8l1.500 3H4z" fill="#d99a1c" /><path d="M7 19v-8h16v8h-4v-4h-8v4z" fill="#3f8ed6" /></svg>
    </TaskApp>
    <StackEdge $w={5} />
    <Gap $w={9} />
    <TaskApp $w={40}>
      <svg width="24" height="26" viewBox="0 0 24 26"><defs><linearGradient id="st" x2="1" y2="1"><stop offset="0" stopColor="#1570c0" /><stop offset="1" stopColor="#23355c" /></linearGradient></defs><path d="M6.500 6V2.500h11V6" fill="none" stroke="#2fb8ec" strokeWidth="2" /><rect y="4.500" width="24" height="20.500" rx="3" fill="url(#st)" /><path d="M7 10h4.300v4.300H7z" fill="#f25022" /><path d="M12.300 10h4.300v4.300h-4.300z" fill="#7fba00" /><path d="M7 15.300h4.300v4.300H7z" fill="#00a4ef" /><path d="M12.300 15.300h4.300v4.300h-4.300z" fill="#ffb900" /></svg>
    </TaskApp>
    <Gap $w={9} />
    <TaskApp $w={40}>
      <svg width="24" height="24" viewBox="0 0 24 24"><path d="M0 9L12 1l12 8v2H0z" fill="#0e5fae" /><path d="M2 7.500h20V18H2z" fill="#fff" /><path d="M0 8.500l12 7L24 8.500V23H0z" fill="#28a8ea" /><path d="M0 23L24 9v14z" fill="#1b87d6" /><path d="M0 8.500L12 16l-12 7z" fill="#4cc2f5" /></svg>
    </TaskApp>
    <Gap $w={9} />
    <TaskApp $w={40}>
      <svg width="22" height="24" viewBox="0 0 22 24"><path d="M3 17h16l2 6H1z" fill="#f58a0b" /><path d="M9.500 1h3L17.500 18q-6.500 3.500-13 0z" fill="#f7870a" /><path d="M8.300 5h5.400l1.200 4Q11 10.500 7.100 9zM6.200 12q4.800 2 9.600 0l1 3.500q-5.800 2.500-11.600 0z" fill="#f2f2f2" /></svg>
    </TaskApp>
    <Gap $w={5} />
    <TaskApp $w={45} $line="#0078d7" $tile>
      <svg width="24" height="24" viewBox="-4 -3 23 23"><path d="M-3-3h22v22H-3z" fill="#f4f4f4" stroke="#c8c8c8" /><TableauMark size={17} mono /></svg>
    </TaskApp>
    <StackEdge $w={3} />
    <Gap $w={5} />
    <TaskApp $w={40} $line="#0078d7">
      <svg width="26" height="24" viewBox="0 0 26 24"><ellipse cx="16" cy="21" rx="7" ry="2.500" fill="#c4c4c4" /><path d="M13 16h5v5h-5z" fill="#aaa" /><path d="M5 1l19 1.500-1 15L8 18z" fill="#d8d8e0" /><path d="M7 2.500l15.500 1-1 12.500L9 16.500z" fill="#1c2cc0" /><path d="M16 3l6.500.5-1 12.500-5 .3z" fill="#6c86e0" /><path d="M0 7h16v7H1z" fill="#4a92dc" stroke="#b5cbe8" /><path d="M2 9.500h12M2 11.500h12" stroke="#fff" strokeDasharray="1.500 1" /></svg>
    </TaskApp>
    <Tray>
      <svg width="24" height="22" viewBox="0 0 24 22"><defs><linearGradient id="sun" x2="0" y2="1"><stop offset="0" stopColor="#ffc21a" /><stop offset="1" stopColor="#ef6d0c" /></linearGradient></defs><circle cx="13" cy="11" r="10" fill="url(#sun)" /><path d="M3 7.500h11M16 7.500h7M6 11h16M1 14.500h10M13 14.500h8M3 18h12" stroke="#ffe2ab" strokeWidth="1.300" /></svg>
      <Gap $w={8} />30°C  Haze<Gap $w={24} />
      <svg width="12" height="8" fill="none" stroke="#111" strokeWidth="1.400"><path d="M.7 7L6 1.500 11.300 7" /></svg>
      <Gap $w={13} />
      <svg width="13" height="14" fill="none" stroke="#111" strokeWidth="1.200"><path d="M.8 13Q1 3 12 1.500M4 13Q4.500 6 12 5M7 13Q7.500 9 12 8.500" /><circle cx="11" cy="12" r="1.500" fill="#111" stroke="none" /></svg>
      <Gap $w={8} />
      <svg width="17" height="14" fill="none" stroke="#111" strokeWidth="1.200"><path d="M6.500 3.500h8.500v8H6M16 6v3M1 3.500h4v2.500q-2 2.500-4 0zM2 1v2.500M4 1v2.500M3 7v4.500h3" /></svg>
      <Clock>10:57 AM{"\n"}10/20/2023</Clock>
      <Gap $w={9} />
      <svg width="26" height="26" viewBox="0 -1 26 26"><path d="M1 1h16v12H7l-3.500 3V13H1z" fill="#000" /><path d="M4 4.500h10M4 7h10M4 9.500h6" stroke="#eee" /><circle cx="16" cy="16.500" r="7.800" fill="#e2e2e2" fillOpacity=".93" stroke="#777" strokeOpacity=".7" /><text x="16" y="20.500" textAnchor="middle" fontSize="11" fill="#111">7</text></svg>
      <Gap $w={10} />
      <TrayEnd />
    </Tray>
  </Taskbar>
);

export default function App() {
  return (
    <Window>
      <Global />
      <TitleBar>
        <svg width="15" height="15" viewBox="-1 -1 19 19"><path d="M-1-1h19v19H-1z" fill="#f7f7f7" stroke="#b5b5b5" /><TableauMark size={17} mono /></svg>
        <TitleText>Tableau - Book1_16974326283110 [from PUBLIC.TABLEAU.COM]</TitleText>
        <WindowButtons>
          <svg width="10" height="10" stroke="#000"><path d="M0 5.500h10" /></svg>
          <svg width="10" height="10" stroke="#000" fill="none"><path d="M.5 2.500h7v7h-7zM2.500 2.500v-2h7v7h-2" /></svg>
          <svg width="11" height="11" stroke="#000"><path d="M.5 .5l10 10M10.500 .5l-10 10" /></svg>
        </WindowButtons>
      </TitleBar>
      <MenuBar>{menus.map(([m, w]) => <MenuItem key={m} $w={w}>{m}</MenuItem>)}</MenuBar>
      <ToolbarRow />
      <Main>
        <DataPanel />
        <Cards>
          <Card $h={62}><CardTitle>Pages</CardTitle></Card>
          <Card $h={78}><CardTitle>Filters</CardTitle></Card>
          <MarksCard />
        </Cards>
        <Workspace>
          <Shelf><ShelfName><svg width="13" height="12" fill="#555"><path d="M1 0h2v2H1zM5.500 0h2v2h-2zM10 0h2v2h-2zM1 3h2v9H1zM5.500 3h2v9h-2zM10 3h2v9h-2z" /></svg>Columns</ShelfName></Shelf>
          <Shelf><ShelfName><svg width="13" height="10" fill="#555"><path d="M0 0h2v2H0zM0 4h2v2H0zM0 8h2v2H0zM3 0h9v2H3zM3 4h9v2H3zM3 8h9v2H3z" /></svg>Rows</ShelfName></Shelf>
          <Lower>
            <ViewColumn>
              <View>
                <ViewTitle>Crops  (Plantation by count )</ViewTitle>
                <WordCloud />
              </View>
              <Caption>
                <CaptionHead>Caption<Caret c="#aaa" /></CaptionHead>
                <CaptionText>Crop.  Color shows details about Crop.  Size shows count of Crop.</CaptionText>
              </Caption>
            </ViewColumn>
            <Legend>
              <LegendHead>Crop</LegendHead>
              <LegendBody>
                <LegendList>{legend.map(([n, c]) => <LegendItem key={n}><Swatch $c={c} />{n}</LegendItem>)}</LegendList>
                <Scroll>
                  <ScrollEnd><svg width="8" height="6" fill="none" stroke="#505050" strokeWidth="2"><path d="M.7 5L4 1.700 7.300 5" /></svg></ScrollEnd>
                  <Thumb />
                  <ScrollEnd><svg width="8" height="6" fill="none" stroke="#505050" strokeWidth="2"><path d="M.7 1L4 4.300 7.300 1" /></svg></ScrollEnd>
                </Scroll>
              </LegendBody>
            </Legend>
          </Lower>
        </Workspace>
      </Main>
      <SheetTabs>
        {tabs.map((t) => (
          <SheetTab key={t.label} $w={t.w} $on={t.on} $pad={t.pad}>{t.icon}{t.label}</SheetTab>
        ))}
        <SheetTab $w={32} $pad={9}><svg width="16" height="16" fill="none" stroke="#666"><path d="M.5 .5h11v11H.5zM3.500 9V6M5.500 9V4.500M7.500 9V3.500M9.500 7V5.500" /><Plus /></svg></SheetTab>
        <SheetTab $w={32} $pad={9}><Grid4 plus /></SheetTab>
        <SheetTab $w={32} $pad={9}><Book plus /></SheetTab>
      </SheetTabs>
      <Status>
        <StatusText $w={64}>57 marks</StatusText>
        <StatusText $w={106}>1 row by 1 column</StatusText>
        <StatusText $w={826}>SUM of CNT(Crop): 345,375</StatusText>
        <StatusCell $w={127}><Person /><UserName>Manojkumar  P</UserName><Caret c="#000" /></StatusCell>
        <StatusCell $w={27} /><StatusCell $w={27} /><StatusCell $w={47} />
        <StatusCell $w={71}><svg width="56" height="8" fill="#bababa"><path d="M2 0h1v8H2zM8 0v8L3.500 4zM23 0v8L19 4zM36 0v8l4-4zM51 0v8l4-4zM55 0h1v8h-1z" /></svg></StatusCell>
        <StatusCell $w={68}>
          <svg width="56" height="12" fill="#bababa"><path d="M2 0h3v3H2zM6 0h3v3H6zM10 0h3v3h-3zM2 4h3v3H2zM6 4h3v3H6zM10 4h3v3h-3zM2 8h3v3H2zM6 8h3v3H6zM10 8h3v3h-3zM23 0h11v6H23zM23 8h3v3h-3zM27 8h3v3h-3zM31 8h3v3h-3z" /><path d="M44 0h11v11H44z" fill="#666" /></svg>
        </StatusCell>
      </Status>
      <TaskbarRow />
    </Window>
  );
}
